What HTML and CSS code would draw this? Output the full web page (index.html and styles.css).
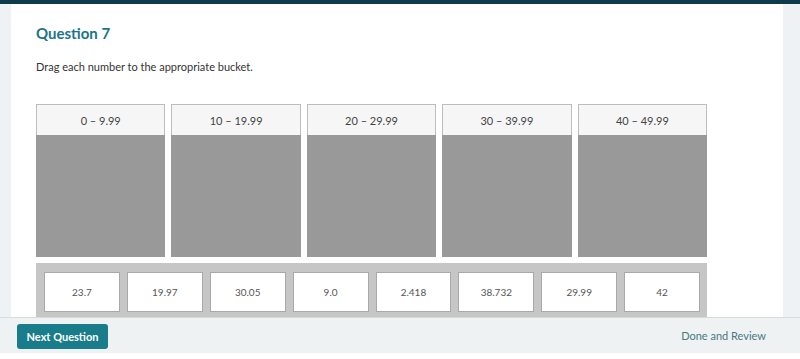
FILE: index.html
```html
<!DOCTYPE html>
<html>
<head>
<meta charset="utf-8">
<link rel="stylesheet" href="styles.css">
</head>
<body>
<div class="topbar"></div>
<div class="page">
  <main class="content">
    <h1 class="title">Question 7</h1>
    <p class="prompt">Drag each number to the appropriate bucket.</p>
    <div class="buckets">
      <div class="bucket"><div class="bucket-head">0 – 9.99</div><div class="bucket-body"></div></div>
      <div class="bucket"><div class="bucket-head">10 – 19.99</div><div class="bucket-body"></div></div>
      <div class="bucket"><div class="bucket-head">20 – 29.99</div><div class="bucket-body"></div></div>
      <div class="bucket"><div class="bucket-head">30 – 39.99</div><div class="bucket-body"></div></div>
      <div class="bucket"><div class="bucket-head">40 – 49.99</div><div class="bucket-body"></div></div>
    </div>
    <div class="tray">
      <div class="tile">23.7</div>
      <div class="tile">19.97</div>
      <div class="tile">30.05</div>
      <div class="tile">9.0</div>
      <div class="tile">2.418</div>
      <div class="tile">38.732</div>
      <div class="tile">29.99</div>
      <div class="tile">42</div>
    </div>
  </main>
</div>
<footer class="footer">
  <button class="next-btn">Next Question</button>
  <a class="done-link">Done and Review</a>
</footer>
<div class="bottom-gap"></div>
</body>
</html>
```
FILE: styles.css
```css
* { box-sizing: border-box; }
html, body { margin: 0; padding: 0; }
body {
  font-family: "Lato", "Open Sans", sans-serif;
  background: #ffffff;
  overflow: hidden;
  height: 359px;
}
.topbar {
  height: 4px;
  background: #0d3b4c;
}
.page {
  background: #eef2f4;
  padding: 0 17px 0 11px;
}
.content {
  background: #ffffff;
  height: 313px;
  padding: 20px 0 0 25px;
  overflow: hidden;
}
.title {
  margin: 0;
  font-size: 15px;
  line-height: 18px;
  font-weight: 700;
  color: #1b7585;
}
.prompt {
  margin: 18px 0 0;
  font-size: 11px;
  line-height: 14px;
  color: #333333;
}
.buckets {
  margin-top: 30px;
  width: 671px;
  display: flex;
  gap: 6px;
}
.bucket {
  flex: 1;
  display: flex;
  flex-direction: column;
}
.bucket-head {
  height: 31px;
  background: #f6f6f6;
  border: 1px solid #bdbdbd;
  border-bottom: none;
  font-size: 11px;
  color: #444444;
  display: flex;
  align-items: center;
  justify-content: center;
}
.bucket-body {
  height: 122px;
  background: #999999;
}
.tray {
  margin-top: 6px;
  width: 671px;
  background: #c6c6c6;
  padding: 9px 7px 6px 8px;
  display: flex;
  gap: 7px;
}
.tile {
  width: 76px;
  height: 40px;
  background: #ffffff;
  border: 1px solid #a9a9a9;
  display: flex;
  align-items: center;
  justify-content: center;
  font-size: 10px;
  color: #555555;
}
.footer {
  height: 36px;
  background: #eef2f3;
  border-top: 1px solid #d6dcde;
  display: flex;
  align-items: center;
  justify-content: space-between;
  padding: 0 34px 0 17px;
}
.next-btn {
  width: 91px;
  height: 25px;
  border: none;
  border-radius: 3px;
  background: #187c8a;
  color: #ffffff;
  font-family: "Lato", "Open Sans", sans-serif;
  font-size: 11px;
  font-weight: 700;
  padding: 0;
  margin-top: 1px;
}
.done-link {
  font-size: 11px;
  color: #4b7882;
}
.bottom-gap {
  height: 6px;
  background: #ffffff;
}
```
